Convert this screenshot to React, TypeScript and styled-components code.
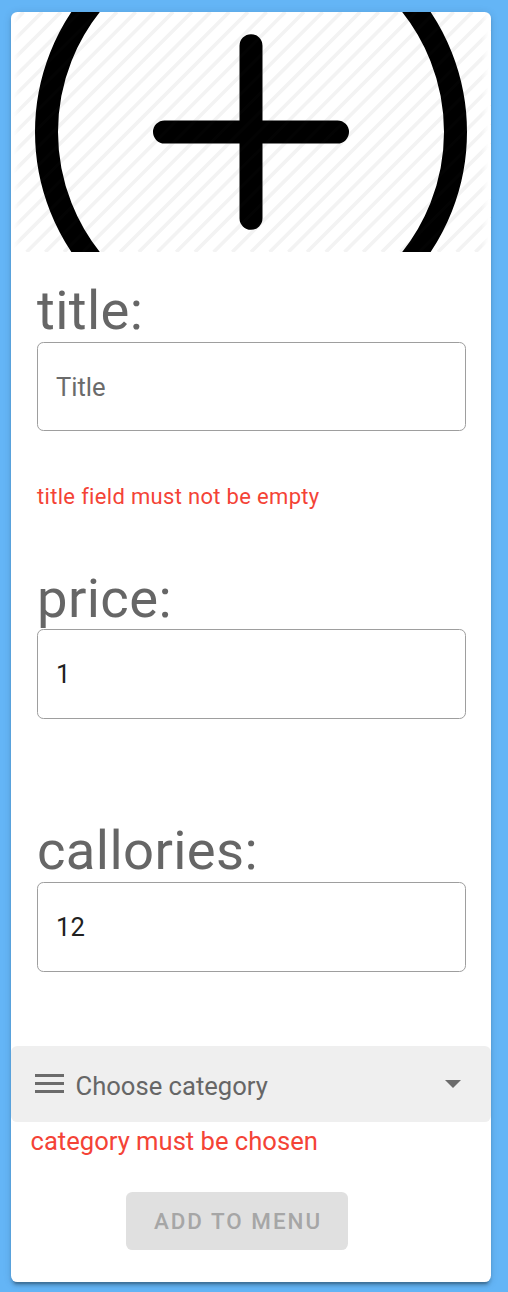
import React from "react";
import styled, { createGlobalStyle } from "styled-components";

const Global = createGlobalStyle`
  * { box-sizing: border-box; }
  body { margin: 0; background: #64b5f6; font-family: Roboto, "Liberation Sans", sans-serif; }
`;

const Page = styled.main`
  min-height: 1292px;
  padding: 12px 17px 10px 11px;
`;

const Card = styled.form`
  height: 1270px;
  display: flex;
  flex-direction: column;
  background: #fff;
  border-radius: 6.4px;
  box-shadow: 0 4.8px 1.6px -3.2px rgba(0, 0, 0, 0.2), 0 3.2px 3.2px 0 rgba(0, 0, 0, 0.14),
    0 1.6px 8px 0 rgba(0, 0, 0, 0.12);
`;

const Cover = styled.svg`
  display: block;
  width: 480px;
  height: 240px;
  flex: none;
  border-radius: 6.4px 6.4px 0 0;
`;

const Field = styled.section<{ $height: number; $first?: boolean }>`
  height: ${(p) => p.$height}px;
  flex: none;
  padding: ${(p) => (p.$first ? 26 : 0)}px 25px 0 26px;
`;

const Label = styled.label<{ $line?: number }>`
  display: block;
  height: 64px;
  line-height: ${(p) => p.$line ?? 66}px;
  font-size: 54.4px;
  letter-spacing: 0.38px;
  color: #666;
  white-space: nowrap;
`;

const Input = styled.input<{ $height?: number }>`
  display: block;
  width: 100%;
  height: ${(p) => p.$height ?? 90}px;
  padding: 0 18px;
  border: 1px solid #9e9e9e;
  border-radius: 6.4px;
  outline: none;
  background: transparent;
  font: 400 25.6px Roboto, "Liberation Sans", sans-serif;
  color: #212121;
  &::placeholder { color: #6b6b6b; opacity: 1; }
`;

const FieldError = styled.p`
  margin: 53px 0 0;
  font-size: 22px;
  line-height: 26px;
  letter-spacing: 0.32px;
  color: #f44336;
`;

const Select = styled.div`
  flex: none;
  height: 76px;
  padding: 0 30.5px 0 24px;
  display: flex;
  align-items: center;
  background: #efefef;
  border-radius: 6.4px;
  color: #666;
  font-size: 25.6px;
`;

const SelectText = styled.span`
  flex: 1;
  padding: 4px 0 0 11.5px;
`;

const CategoryError = styled.p`
  margin: 4px 0 0 19.5px;
  line-height: 30px;
  font-size: 25.6px;
  color: #f44336;
`;

const Submit = styled.button`
  width: 222px;
  height: 58px;
  margin: 36px 0 0 115px;
  padding: 0 0 0 2px;
  border: 0;
  border-radius: 6.4px;
  background: #e0e0e0;
  color: #a6a6a6;
  font: 500 22.4px Roboto, "Liberation Sans", sans-serif;
  letter-spacing: 2px;
  text-transform: uppercase;
`;

const STRIPE_GAP = 18.7;
const stripes = Array.from({ length: 40 }, (_, i) => {
  const start = 12.5 + i * STRIPE_GAP;
  return `M${start.toFixed(1)} 0l-240 240`;
}).join("");

export default function App() {
  return (
    <Page>
      <Global />
      <Card>
        <Cover viewBox="0 0 480 240">
          <defs>
            <linearGradient id="edges">
              <stop offset="0.005" stopColor="#000" />
              <stop offset="0.02" stopColor="#fff" />
              <stop offset="0.98" stopColor="#fff" />
              <stop offset="0.995" stopColor="#000" />
            </linearGradient>
            <mask id="fade" maskUnits="userSpaceOnUse" x="0" y="0" width="480" height="240">
              <rect width="480" height="240" fill="url(#edges)" />
            </mask>
          </defs>
          <g mask="url(#fade)">
            <path d={stripes} stroke="#f3f3f3" strokeWidth="3.6" />
          </g>
          <g fill="none" stroke="#000" strokeWidth="23">
            <circle cx="240" cy="120" r="204.5" />
            <path d="M240 33.7V206.3M153.5 120H326.5" strokeLinecap="round" />
          </g>
          <path d={stripes} stroke="#fff" strokeOpacity="0.012" strokeWidth="3.2" />
        </Cover>
        <Field $height={313} $first>
          <Label htmlFor="title">title:</Label>
          <Input id="title" placeholder="Title" $height={89} />
          <FieldError>title field must not be empty</FieldError>
        </Field>
        <Field $height={253}>
          <Label htmlFor="price" $line={68}>price:</Label>
          <Input id="price" defaultValue="1" />
        </Field>
        <Field $height={228}>
          <Label htmlFor="callories">callories:</Label>
          <Input id="callories" defaultValue="12" />
        </Field>
        <Select>
          <svg width="29" height="20" viewBox="0 0 29 20" fill="#6b6b6b">
            <path d="M0 0h29v3H0zM0 8h29v3H0zM0 16h29v3H0z" />
          </svg>
          <SelectText>Choose category</SelectText>
          <svg width="16" height="8" viewBox="0 0 16 8" fill="#6b6b6b">
            <path d="M0 0h16L8 8z" />
          </svg>
        </Select>
        <CategoryError>category must be chosen</CategoryError>
        <Submit type="button" disabled>Add to menu</Submit>
      </Card>
    </Page>
  );
}
